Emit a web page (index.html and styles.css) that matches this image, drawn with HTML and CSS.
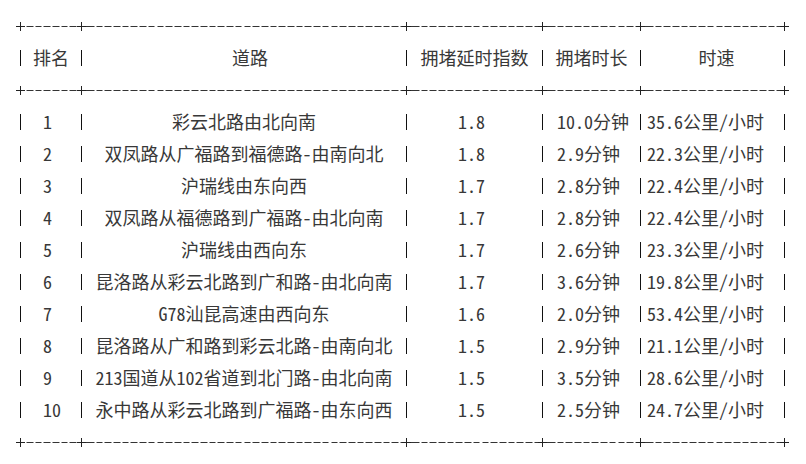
FILE: index.html
```html
<!DOCTYPE html>
<html lang="zh-CN">
<head>
<meta charset="utf-8">
<title>拥堵排名</title>
<link rel="stylesheet" href="styles.css">
</head>
<body>
<div class="table">
  <div class="row rule">
    <span class="plus"></span><span class="dash"></span><span class="plus"></span><span class="dash"></span><span class="plus"></span><span class="dash"></span><span class="plus"></span><span class="dash"></span><span class="plus"></span><span class="dash"></span><span class="plus"></span>
  </div>
  <div class="row head">
    <span class="bar"></span><span class="cell">排名</span><span class="bar"></span><span class="cell road-h">道路</span><span class="bar"></span><span class="cell">拥堵延时指数</span><span class="bar"></span><span class="cell">拥堵时长</span><span class="bar"></span><span class="cell speed-h">时速</span><span class="bar"></span>
  </div>
  <div class="row rule">
    <span class="plus"></span><span class="dash"></span><span class="plus"></span><span class="dash"></span><span class="plus"></span><span class="dash"></span><span class="plus"></span><span class="dash"></span><span class="plus"></span><span class="dash"></span><span class="plus"></span>
  </div>

  <div class="row data"><span class="bar"></span><span class="cell rank">1</span><span class="bar"></span><span class="cell road">彩云北路由北向南</span><span class="bar"></span><span class="cell idx">1.8</span><span class="bar"></span><span class="cell dur">10.0分钟</span><span class="bar"></span><span class="cell spd">35.6公里/小时</span><span class="bar"></span></div>
  <div class="row data"><span class="bar"></span><span class="cell rank">2</span><span class="bar"></span><span class="cell road">双凤路从广福路到福德路-由南向北</span><span class="bar"></span><span class="cell idx">1.8</span><span class="bar"></span><span class="cell dur">2.9分钟</span><span class="bar"></span><span class="cell spd">22.3公里/小时</span><span class="bar"></span></div>
  <div class="row data"><span class="bar"></span><span class="cell rank">3</span><span class="bar"></span><span class="cell road">沪瑞线由东向西</span><span class="bar"></span><span class="cell idx">1.7</span><span class="bar"></span><span class="cell dur">2.8分钟</span><span class="bar"></span><span class="cell spd">22.4公里/小时</span><span class="bar"></span></div>
  <div class="row data"><span class="bar"></span><span class="cell rank">4</span><span class="bar"></span><span class="cell road">双凤路从福德路到广福路-由北向南</span><span class="bar"></span><span class="cell idx">1.7</span><span class="bar"></span><span class="cell dur">2.8分钟</span><span class="bar"></span><span class="cell spd">22.4公里/小时</span><span class="bar"></span></div>
  <div class="row data"><span class="bar"></span><span class="cell rank">5</span><span class="bar"></span><span class="cell road">沪瑞线由西向东</span><span class="bar"></span><span class="cell idx">1.7</span><span class="bar"></span><span class="cell dur">2.6分钟</span><span class="bar"></span><span class="cell spd">23.3公里/小时</span><span class="bar"></span></div>
  <div class="row data"><span class="bar"></span><span class="cell rank">6</span><span class="bar"></span><span class="cell road">昆洛路从彩云北路到广和路-由北向南</span><span class="bar"></span><span class="cell idx">1.7</span><span class="bar"></span><span class="cell dur">3.6分钟</span><span class="bar"></span><span class="cell spd">19.8公里/小时</span><span class="bar"></span></div>
  <div class="row data"><span class="bar"></span><span class="cell rank">7</span><span class="bar"></span><span class="cell road">G78汕昆高速由西向东</span><span class="bar"></span><span class="cell idx">1.6</span><span class="bar"></span><span class="cell dur">2.0分钟</span><span class="bar"></span><span class="cell spd">53.4公里/小时</span><span class="bar"></span></div>
  <div class="row data"><span class="bar"></span><span class="cell rank">8</span><span class="bar"></span><span class="cell road">昆洛路从广和路到彩云北路-由南向北</span><span class="bar"></span><span class="cell idx">1.5</span><span class="bar"></span><span class="cell dur">2.9分钟</span><span class="bar"></span><span class="cell spd">21.1公里/小时</span><span class="bar"></span></div>
  <div class="row data"><span class="bar"></span><span class="cell rank">9</span><span class="bar"></span><span class="cell road">213国道从102省道到北门路-由北向南</span><span class="bar"></span><span class="cell idx">1.5</span><span class="bar"></span><span class="cell dur">3.5分钟</span><span class="bar"></span><span class="cell spd">28.6公里/小时</span><span class="bar"></span></div>
  <div class="row data"><span class="bar"></span><span class="cell rank">10</span><span class="bar"></span><span class="cell road">永中路从彩云北路到广福路-由东向西</span><span class="bar"></span><span class="cell idx">1.5</span><span class="bar"></span><span class="cell dur">2.5分钟</span><span class="bar"></span><span class="cell spd">24.7公里/小时</span><span class="bar"></span></div>

  <div class="row rule">
    <span class="plus"></span><span class="dash"></span><span class="plus"></span><span class="dash"></span><span class="plus"></span><span class="dash"></span><span class="plus"></span><span class="dash"></span><span class="plus"></span><span class="dash"></span><span class="plus"></span>
  </div>
</div>
</body>
</html>
```

FILE: styles.css
```css
html, body {
  margin: 0;
  padding: 0;
  background: #ffffff;
}

.table {
  padding: 10px 0 0 16px;
  font-family: "Noto Sans Mono CJK SC", "Noto Sans CJK SC", "Liberation Mono", monospace;
  font-size: 18px;
  color: #383838;
}

.row {
  display: grid;
  grid-template-columns: 9px 52px 9px 316px 9px 127px 9px 89px 9px 135px 9px;
  height: 32px;
  align-items: start;
}

.cell {
  line-height: 30px;
  padding-bottom: 2px;
  white-space: nowrap;
  text-align: center;
}

.bar {
  position: relative;
  height: 32px;
}
.bar::before {
  content: "";
  position: absolute;
  left: 4px;
  top: 8px;
  width: 1px;
  height: 16px;
  background: #111;
}

.plus {
  position: relative;
  height: 32px;
}
.plus::before {
  content: "";
  position: absolute;
  left: 0;
  top: 16px;
  width: 9px;
  height: 1px;
  background: #222;
}
.plus::after {
  content: "";
  position: absolute;
  left: 4px;
  top: 12px;
  width: 1px;
  height: 9px;
  background: #222;
}

.dash {
  height: 1px;
  margin-top: 16px;
  background-image: repeating-linear-gradient(to right, #333 0 6.6px, transparent 6.6px 8.7px);
  background-position: 1.5px 0;
}

.road-h { padding-left: 12px; }
.speed-h { padding-left: 8px; }

.rank { text-align: left; padding-left: 18px; }
.idx { padding-right: 6px; }
.dur { text-align: left; padding-left: 10px; }
.spd { text-align: left; padding-left: 2px; }
```
